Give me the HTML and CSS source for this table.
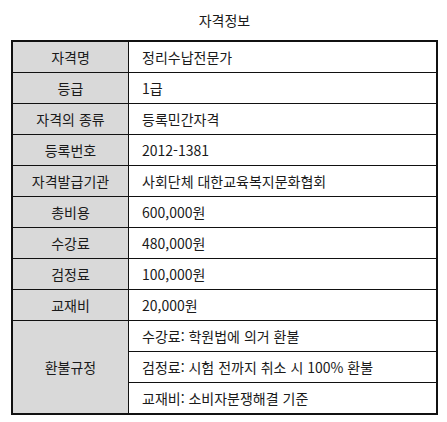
FILE: index.html
```html
<!DOCTYPE html>
<html lang="ko">
<head>
<meta charset="utf-8">
<link rel="stylesheet" href="styles.css">
</head>
<body>
<div class="wrap">
  <div class="title">자격정보</div>
  <table class="info">
    <tr><th>자격명</th><td>정리수납전문가</td></tr>
    <tr><th>등급</th><td>1급</td></tr>
    <tr><th>자격의 종류</th><td>등록민간자격</td></tr>
    <tr><th>등록번호</th><td>2012-1381</td></tr>
    <tr><th>자격발급기관</th><td>사회단체 대한교육복지문화협회</td></tr>
    <tr><th>총비용</th><td>600,000원</td></tr>
    <tr><th>수강료</th><td>480,000원</td></tr>
    <tr><th>검정료</th><td>100,000원</td></tr>
    <tr><th>교재비</th><td>20,000원</td></tr>
    <tr><th rowspan="3">환불규정</th><td>수강료: 학원법에 의거 환불</td></tr>
    <tr><td>검정료: 시험 전까지 취소 시 100% 환불</td></tr>
    <tr><td>교재비: 소비자분쟁해결 기준</td></tr>
  </table>
</div>
</body>
</html>
```
FILE: styles.css
```css
html, body {
  margin: 0;
  padding: 0;
  background: #ffffff;
}
body {
  font-family: "Noto Sans CJK KR", "Noto Sans", sans-serif;
  color: #1a1a1a;
  font-size: 14px;
}
.wrap {
  padding: 0 9px 0 11px;
}
.title {
  height: 40px;
  line-height: 40px;
  text-align: center;
  font-size: 14px;
}
.info {
  width: 427px;
  border-collapse: collapse;
  border: 2px solid #111;
}
.info th,
.info td {
  border: 1px solid #111;
  height: 30px;
  padding: 0;
  font-weight: normal;
  line-height: 16px;
}
.info th {
  width: 115px;
  background: #d9d9d9;
  text-align: center;
}
.info td {
  text-align: left;
  padding-left: 13px;
}
```
